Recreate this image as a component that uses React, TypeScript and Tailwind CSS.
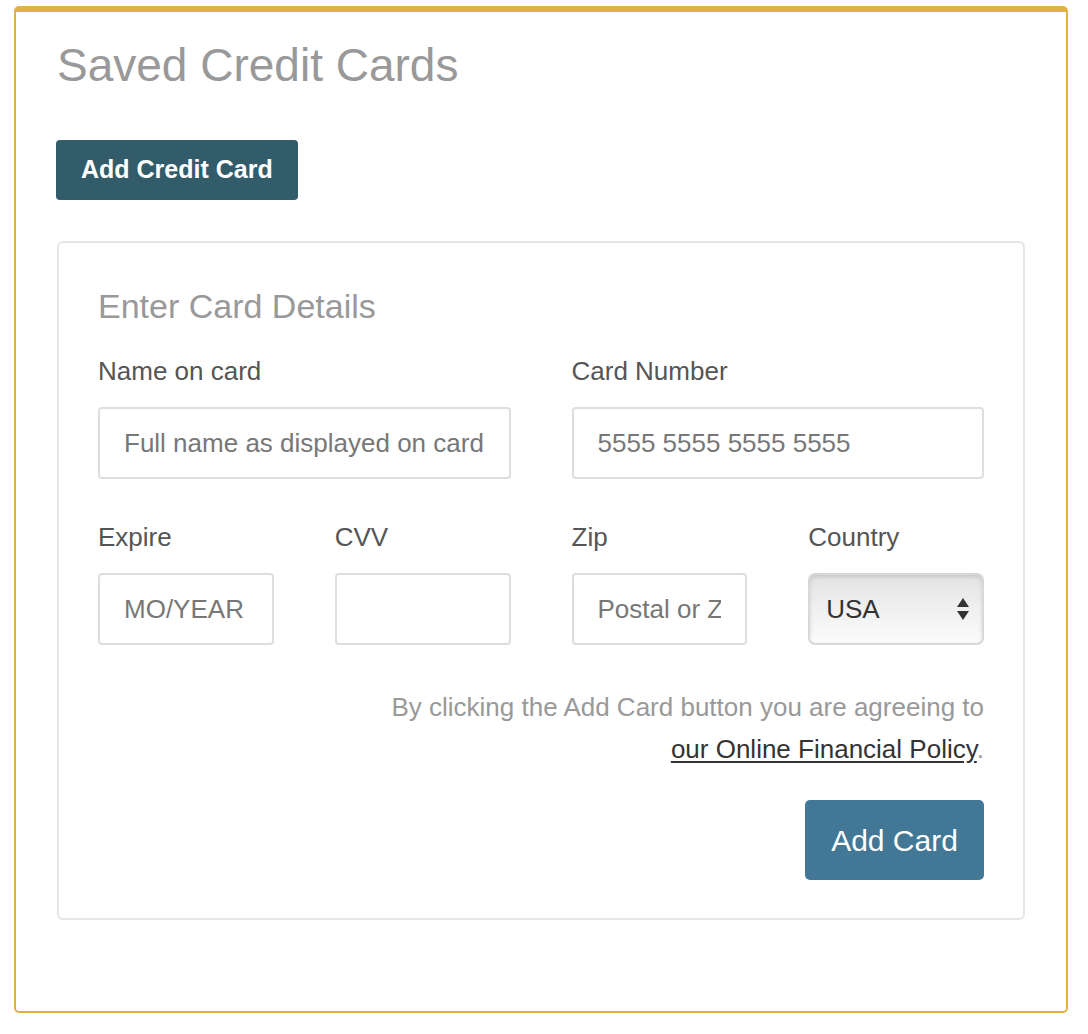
import React from 'react';

const FONT = { fontFamily: '"Liberation Sans", Arial, Helvetica, sans-serif' };

function Field({ label, children }: { label: string; children: React.ReactNode }) {
  return (
    <div className="flex flex-col">
      <label className="text-[26px] leading-[32px] text-[#555]">{label}</label>
      <div className="mt-[20px]">{children}</div>
    </div>
  );
}

function TextInput({ placeholder }: { placeholder?: string }) {
  return (
    <input
      type="text"
      placeholder={placeholder}
      className="w-full h-[72px] rounded-[4px] border-2 border-[#dedede] bg-white px-[24px] text-[26px] text-[#333] placeholder:text-[#777] outline-none"
      style={FONT}
    />
  );
}

function CountrySelect() {
  return (
    <div className="relative h-[72px] w-full rounded-[7px] border-2 border-[#d8d8d8] bg-gradient-to-b from-[#e2e2e2] via-[#f0f0f0] to-[#fbfbfb] shadow-[inset_0_2px_4px_rgba(0,0,0,0.12)]">
      <div className="flex h-full items-center pl-[16px] text-[26px] text-[#333]">USA</div>
      <svg
        className="absolute right-[12px] top-1/2 -translate-y-1/2"
        width="14"
        height="26"
        viewBox="0 0 14 26"
      >
        <path d="M7 2 L13 11 L1 11 Z" fill="#333" />
        <path d="M1 15 L13 15 L7 24 Z" fill="#333" />
      </svg>
    </div>
  );
}

export default function App() {
  return (
    <div className="min-h-[1034px] bg-white pt-[6px]" style={FONT}>
      <div className="ml-[14px] h-[1007px] w-[1054px] rounded-[5px] border-x-2 border-b-2 border-t-[6px] border-[#e1b143] pl-[40px] pr-[41px]">
        <h1 className="mt-[25px] ml-px text-[46px] leading-[56px] font-normal text-[#999]">
          Saved Credit Cards
        </h1>

        <button className="mt-[47px] h-[60px] rounded-[4px] bg-[#335c6b] px-[25px] text-[25px] font-bold text-white">
          Add Credit Card
        </button>

        <div className="mt-[41px] ml-px rounded-[6px] border-2 border-[#e6e6e6] px-[39px] pt-[43px] pb-[38px]">
          <h2 className="text-[34px] leading-[40px] text-[#999]">Enter Card Details</h2>

          <div className="mt-[29px] grid grid-cols-2 gap-x-[61px]">
            <Field label="Name on card">
              <TextInput placeholder="Full name as displayed on card" />
            </Field>
            <Field label="Card Number">
              <TextInput placeholder="5555 5555 5555 5555" />
            </Field>
          </div>

          <div className="mt-[42px] grid grid-cols-4 gap-x-[61px]">
            <Field label="Expire">
              <TextInput placeholder="MO/YEAR" />
            </Field>
            <Field label="CVV">
              <TextInput />
            </Field>
            <Field label="Zip">
              <TextInput placeholder="Postal or Zip" />
            </Field>
            <Field label="Country">
              <CountrySelect />
            </Field>
          </div>

          <p className="mt-[41px] text-right text-[26px] leading-[42px] text-[#999]">
            By clicking the Add Card button you are agreeing to
            <br />
            <a href="#" className="text-[#333] underline underline-offset-[3px]">
              our Online Financial Policy
            </a>
            .
          </p>

          <div className="mt-[30px] flex justify-end">
            <button className="h-[80px] w-[179px] rounded-[5px] bg-[#427896] text-[30px] text-white">
              Add Card
            </button>
          </div>
        </div>
      </div>
    </div>
  );
}
